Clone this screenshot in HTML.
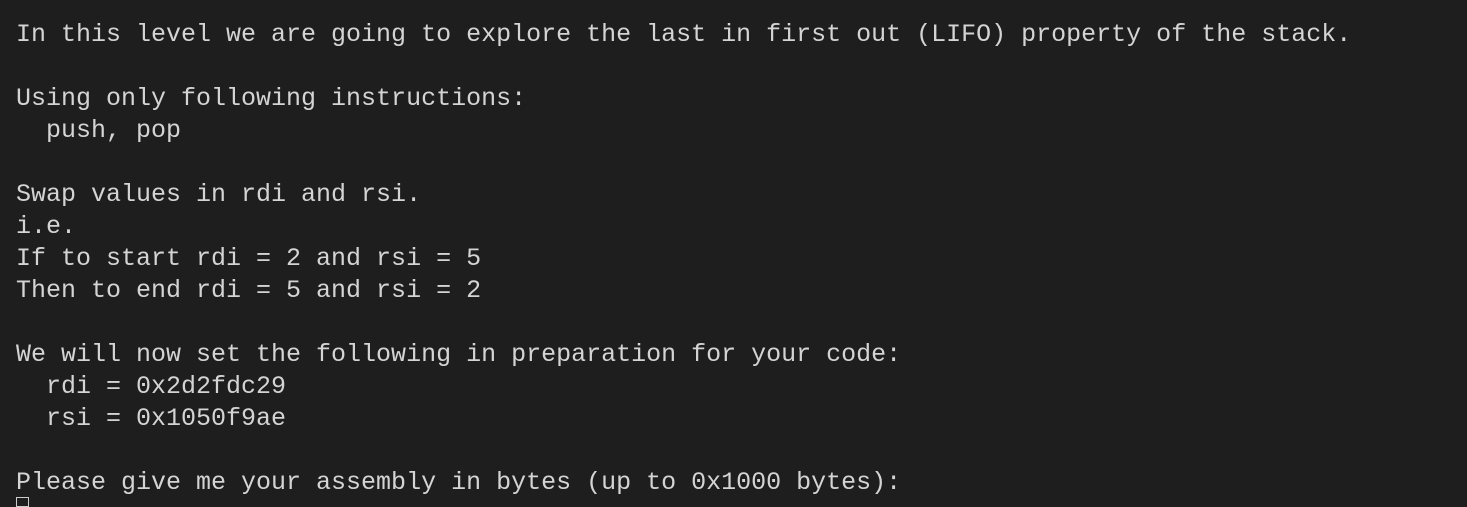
<!DOCTYPE html>
<html><head><style>
html,body{margin:0;padding:0;background:#1e1e1e;width:1467px;height:502px;overflow:hidden}
pre{margin:0;position:absolute;left:16px;top:19px;font-family:"Liberation Mono",monospace;font-size:25px;line-height:32px;color:#d4d4d4;white-space:pre}
.cur{position:absolute;left:16px;top:497px;width:13px;height:10px;border:1px solid #cccccc;box-sizing:border-box}
</style></head><body>
<pre>In this level we are going to explore the last in first out (LIFO) property of the stack.

Using only following instructions:
  push, pop

Swap values in rdi and rsi.
i.e.
If to start rdi = 2 and rsi = 5
Then to end rdi = 5 and rsi = 2

We will now set the following in preparation for your code:
  rdi = 0x2d2fdc29
  rsi = 0x1050f9ae

Please give me your assembly in bytes (up to 0x1000 bytes):</pre>
<div class="cur"></div>
</body></html>
